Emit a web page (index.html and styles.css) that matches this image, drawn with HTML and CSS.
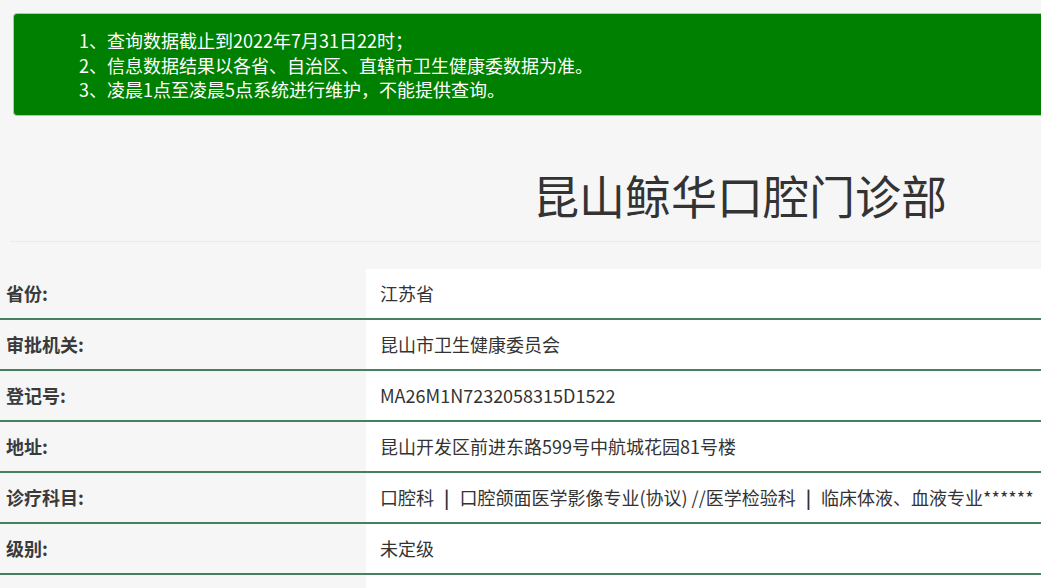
FILE: index.html
```html
<!DOCTYPE html>
<html>

<head>
    <meta charset="utf-8">
    <meta name="viewport" content="width=device-width, initial-scale=1">
    <link rel="stylesheet" href="styles.css">
</head>

<body>
    <div class="page">
        <!-- Aviso superior -->
        <div class="notice">
            <p>1、查询数据截止到2022年7月31日22时；</p>
            <p>2、信息数据结果以各省、自治区、直辖市卫生健康委数据为准。</p>
            <p>3、凌晨1点至凌晨5点系统进行维护，不能提供查询。</p>
        </div>

        <h1 class="title">昆山鲸华口腔门诊部</h1>

        <table class="info">
            <tr>
                <th>省份:</th>
                <td>江苏省</td>
            </tr>
            <tr>
                <th>审批机关:</th>
                <td>昆山市卫生健康委员会</td>
            </tr>
            <tr>
                <th>登记号:</th>
                <td>MA26M1N7232058315D1522</td>
            </tr>
            <tr>
                <th>地址:</th>
                <td>昆山开发区前进东路599号中航城花园81号楼</td>
            </tr>
            <tr>
                <th>诊疗科目:</th>
                <td>口腔科 <span class="sep">|</span> 口腔颌面医学影像专业(协议) //医学检验科 <span class="sep">|</span> 临床体液、血液专业******</td>
            </tr>
            <tr>
                <th>级别:</th>
                <td>未定级</td>
            </tr>
            <tr>
                <th>有效期:</th>
                <td>2021-07-01 至 2026-06-30</td>
            </tr>
        </table>
    </div>
</body>

</html>
```

FILE: styles.css
```css
html,
body {
    margin: 0;
    overflow: hidden;
    background-color: #f6f6f6;
}

body {
    font-family: "Microsoft YaHei", "Noto Sans CJK SC", sans-serif;
    color: #333;
}

.page {
    width: 1480px;
}

.notice {
    margin: 13px 13px 0 13px;
    padding: 14px 0 13px 65px;
    background-color: #008000;
    border: 1px solid #a9cf9a;
    border-radius: 4px;
    color: #fff;
    font-size: 18px;
    line-height: 24.5px;
}

.notice p {
    margin: 0;
}

.title {
    margin: 0 10px;
    padding: 50px 0 19px;
    text-align: center;
    font-size: 46px;
    font-weight: normal;
    line-height: 56px;
    color: #333;
    border-bottom: 1px solid #ebebeb;
}

.info {
    margin-top: 27px;
    width: 100%;
    border-collapse: collapse;
    font-size: 18px;
}

.info tr {
    border-bottom: 2px solid #46805f;
}

.info th,
.info td {
    height: 49px;
    padding: 0;
    line-height: 24px;
    text-align: left;
}

.info th {
    width: 360px;
    padding-left: 6px;
    font-weight: bold;
    color: #3a3a3a;
}

.info td {
    padding-left: 14px;
    background-color: #fff;
}

.sep {
    padding: 0 6px;
    font-weight: bold;
    color: #333;
}
```
